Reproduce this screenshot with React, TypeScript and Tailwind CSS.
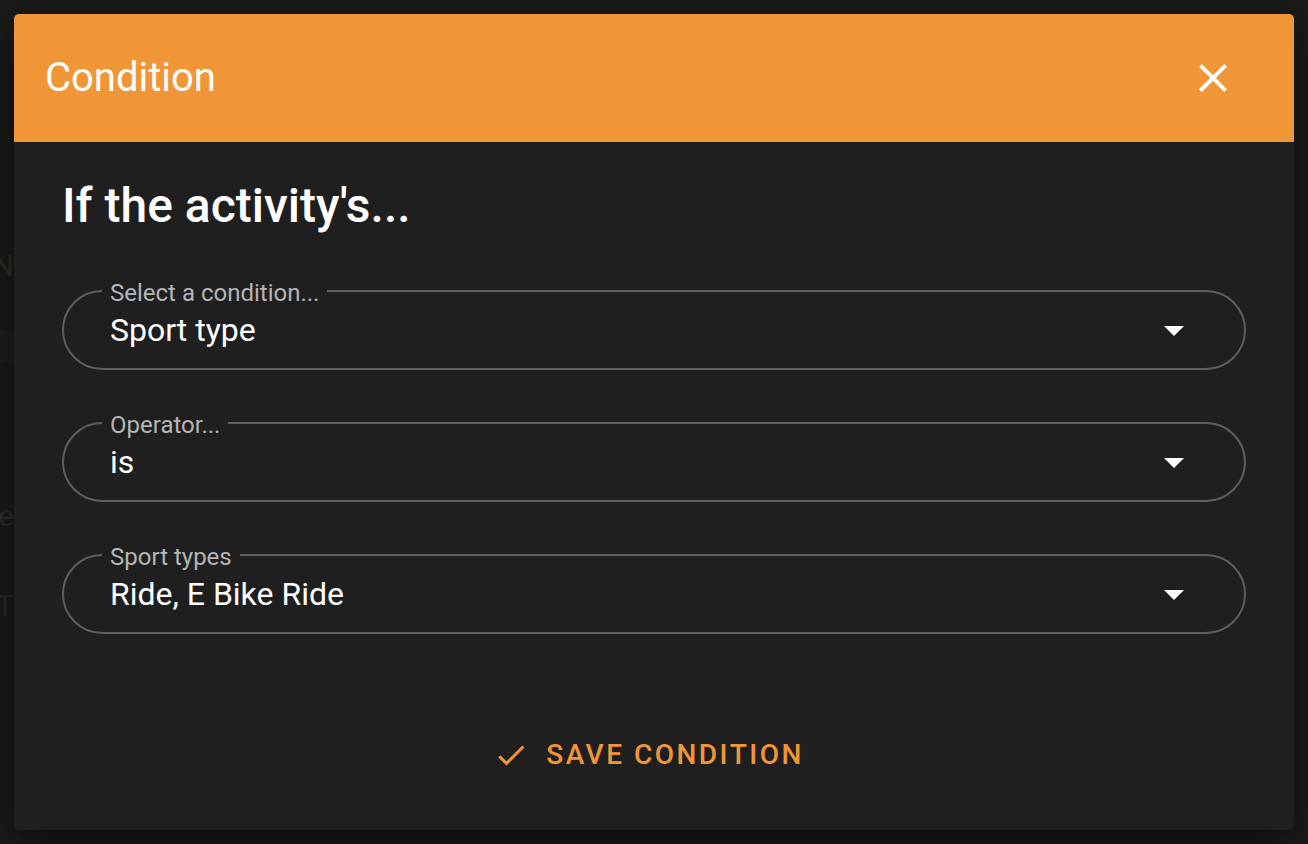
import React from "react";

const ORANGE = "#f19637";

function Field({ label, value }: { label: string; value: string }) {
  return (
    <fieldset className="m-0 min-w-0 rounded-full border-2 border-[#5e5e5e] pl-[38px] pr-[46px] pb-[11px]">
      <legend className="px-[8px] text-[24px] leading-[24px] text-[#b5b5b5]">
        <span className="relative top-[2px]">{label}</span>
      </legend>
      <div className="flex h-[54px] items-center">
        <div className="flex-1 pl-[8px] text-[32px] leading-[40px] text-white">{value}</div>
        <svg width="48" height="48" viewBox="0 0 24 24" className="shrink-0">
          <path d="M7,10L12,15L17,10H7Z" fill="#ffffff" />
        </svg>
      </div>
    </fieldset>
  );
}

export default function App() {
  return (
    <div
      className="relative h-[844px] w-[1308px] overflow-hidden bg-[#1b1b1b]"
      style={{ fontFamily: "Roboto, 'Noto Sans', sans-serif" }}
    >
      {/* dimmed page behind the dialog */}
      <div className="flex w-[14px] flex-col items-end overflow-hidden pt-[248px] text-[30px] leading-[36px]">
        <div className="text-[#3a2c1e] whitespace-nowrap">ON</div>
        <div className="mt-[46px] h-[32px] w-[14px] bg-[#1f1f1f]" />
        <div className="mt-[136px] text-[#2e2e2e] whitespace-nowrap">te</div>
        <div className="mt-[54px] text-[#33291f] whitespace-nowrap">ST</div>
      </div>

      {/* dialog */}
      <div className="absolute left-[14px] top-[14px] flex h-[816px] w-[1280px] flex-col overflow-hidden rounded-[5px] bg-[#1f1f1f] shadow-[0_10px_40px_rgba(0,0,0,0.6)]">
        <div
          className="flex h-[128px] shrink-0 items-center justify-between pl-[31px] pr-[57px]"
          style={{ backgroundColor: ORANGE }}
        >
          <div className="text-[40px] leading-[48px] font-normal text-white">Condition</div>
          <button className="flex h-[48px] w-[48px] items-center justify-center">
            <svg width="48" height="48" viewBox="0 0 24 24">
              <path
                d="M19,6.41L17.59,5L12,10.59L6.41,5L5,6.41L10.59,12L5,17.59L6.41,19L12,13.41L17.59,19L19,17.59L13.41,12L19,6.41Z"
                fill="#ffffff"
              />
            </svg>
          </button>
        </div>

        <div className="flex flex-1 flex-col pl-[48px] pr-[48px] pt-[36px]">
          <h2 className="text-[48px] leading-[56px] font-medium text-white">If the activity's...</h2>

          <div className="mt-[45px] flex flex-col gap-[41px]">
            <Field label="Select a condition..." value="Sport type" />
            <Field label="Operator..." value="is" />
            <Field label="Sport types" value="Ride, E Bike Ride" />
          </div>

          <div className="mt-[85px] flex h-[72px] items-center justify-center">
            <button className="mr-[11px] flex items-center gap-[17px]" style={{ color: ORANGE }}>
              <svg width="36" height="36" viewBox="0 0 24 24">
                <path
                  d="M21,7L9,19L3.5,13.5L4.91,12.09L9,16.17L19.59,5.59L21,7Z"
                  fill={ORANGE}
                />
              </svg>
              <span className="text-[28px] leading-[36px] font-medium tracking-[2.5px] uppercase">
                Save condition
              </span>
            </button>
          </div>
        </div>
      </div>
    </div>
  );
}
